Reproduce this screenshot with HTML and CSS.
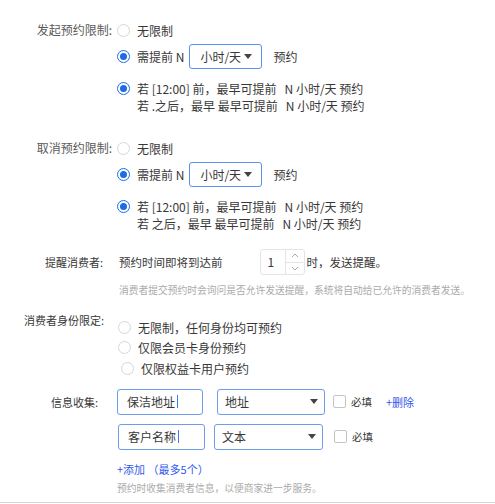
FILE: index.html
```html
<!DOCTYPE html>
<html lang="zh-CN">

<head>
    <meta charset="utf-8">
    <meta name="viewport" content="width=device-width, initial-scale=1.0">
    <title>预约设置</title>
    <link rel="stylesheet" href="styles.css">
</head>

<body>
    <div class="page">

        <!-- 发起预约限制 -->
        <div class="field field-first">
            <div class="field-label label-lg">发起预约限制:</div>
            <div class="options">
                <div class="opt"><span class="radio"></span>无限制</div>
                <div class="opt opt-select">
                    <span class="radio on"></span>需提前 N
                    <div class="select">小时/天<i class="caret"></i></div>
                    <span class="after">预约</span>
                </div>
                <div class="opt opt-multi">
                    <span class="radio on"></span>
                    <div class="lines">若 [12:00] 前，最早可提前   N 小时/天 预约
若 .之后，最早 最早可提前   N 小时/天 预约</div>
                </div>
            </div>
        </div>

        <!-- 取消预约限制 -->
        <div class="field field-cancel">
            <div class="field-label label-lg">取消预约限制:</div>
            <div class="options">
                <div class="opt"><span class="radio"></span>无限制</div>
                <div class="opt opt-select">
                    <span class="radio on"></span>需提前 N
                    <div class="select">小时/天<i class="caret"></i></div>
                    <span class="after">预约</span>
                </div>
                <div class="opt opt-multi">
                    <span class="radio on"></span>
                    <div class="lines">若 [12:00] 前，最早可提前   N 小时/天 预约
若 之后，最早 最早可提前   N 小时/天 预约</div>
                </div>
            </div>
        </div>

        <!-- 提醒消费者 -->
        <div class="field field-remind">
            <div class="field-label label-sm label-tall">提醒消费者:</div>
            <div class="remind">
                <div class="remind-row">
                    <span>预约时间即将到达前</span>
                    <div class="num">
                        <span class="num-val">1</span>
                        <div class="num-spin">
                            <span><svg width="8" height="5" viewBox="0 0 8 5"><polyline points="1,4 4,1 7,4" fill="none" stroke="#aaa" stroke-width="1"/></svg></span>
                            <span><svg width="8" height="5" viewBox="0 0 8 5"><polyline points="1,1 4,4 7,1" fill="none" stroke="#aaa" stroke-width="1"/></svg></span>
                        </div>
                    </div>
                    <span class="remind-end">时，发送提醒。</span>
                </div>
                <p class="help">消费者提交预约时会询问是否允许发送提醒，系统将自动给已允许的消费者发送。</p>
            </div>
        </div>

        <!-- 消费者身份限定 -->
        <div class="field field-identity">
            <div class="field-label label-id">消费者身份限定:</div>
            <div class="options identity">
                <div class="opt"><span class="radio"></span>无限制，任何身份均可预约</div>
                <div class="opt"><span class="radio"></span>仅限会员卡身份预约</div>
                <div class="opt opt-shift"><span class="radio"></span>仅限权益卡用户预约</div>
            </div>
        </div>

        <!-- 信息收集 -->
        <div class="field field-collect">
            <div class="field-label label-xs label-tall">信息收集:</div>
            <div class="collect">
                <div class="collect-row">
                    <div class="text-input">保洁地址<i class="cursor"></i></div>
                    <div class="type-select">地址<i class="caret"></i></div>
                    <span class="check"></span>
                    <span class="check-text">必填</span>
                    <a class="link del">+删除</a>
                </div>
                <div class="collect-row row-two">
                    <div class="text-input">客户名称<i class="cursor"></i></div>
                    <div class="type-select">文本<i class="caret"></i></div>
                    <span class="check"></span>
                    <span class="check-text">必填</span>
                </div>
                <a class="link add">+添加 （最多5个）</a>
                <p class="help help-collect">预约时收集消费者信息，以便商家进一步服务。</p>
            </div>
        </div>

    </div>
</body>

</html>
```

FILE: styles.css
```css
* {
    margin: 0;
    padding: 0;
    box-sizing: border-box;
}

body {
    font-family: "Noto Sans CJK SC", "Noto Sans", sans-serif;
    font-size: 12px;
    color: #383838;
    background-color: #ffffff;
}

.page {
    padding-bottom: 7px;
    border-bottom: 1px solid #d4d4d4;
}

.field {
    display: flex;
    align-items: flex-start;
}

.field-label {
    flex: none;
    text-align: right;
    color: #5a5a5a;
    line-height: 20px;
}

.label-lg {
    width: 112px;
    margin-right: 5px;
}

.label-sm {
    width: 103px;
    margin-right: 16px;
    font-size: 11px;
    color: #383838;
}

.label-id {
    width: 104px;
    margin-right: 14px;
    font-size: 11px;
    line-height: 16px;
    color: #383838;
}

.label-xs {
    width: 98px;
    margin-right: 19px;
    font-size: 11px;
    color: #383838;
}

.label-tall {
    line-height: 26px;
}

.field-first {
    margin-top: 20px;
}

.field-cancel {
    margin-top: 24px;
}

.field-remind {
    margin-top: 17px;
}

.field-identity {
    margin-top: 15px;
}

.field-collect {
    margin-top: 10px;
}

/* radio rows */
.options {
    display: flex;
    flex-direction: column;
}

.opt {
    display: flex;
    align-items: center;
    height: 20px;
    white-space: nowrap;
}

.opt-select {
    height: 25px;
    margin-top: 4px;
}

.opt-multi {
    height: auto;
    margin-top: 11px;
    align-items: flex-start;
}

.opt-multi .radio {
    margin-top: 2px;
}

.lines {
    white-space: pre;
    line-height: 17px;
}

.radio {
    flex: none;
    width: 13px;
    height: 13px;
    border: 1px solid #d6d6d6;
    border-radius: 50%;
    margin-right: 7px;
    background-color: #fff;
}

.radio.on {
    border-color: #1c6ce6;
}

.radio.on::after {
    content: "";
    display: block;
    width: 7px;
    height: 7px;
    margin: 2px;
    border-radius: 50%;
    background-color: #1c6ce6;
}

.select {
    display: flex;
    align-items: center;
    justify-content: space-between;
    width: 73px;
    height: 25px;
    margin-left: 5px;
    padding: 0 9px 0 10px;
    border: 1px solid #5b91ee;
    border-radius: 3px;
}

.caret {
    width: 0;
    height: 0;
    border-left: 4px solid transparent;
    border-right: 4px solid transparent;
    border-top: 5px solid #444;
}

.after {
    margin-left: 11px;
}

/* reminder */
.remind-row {
    display: flex;
    align-items: center;
    height: 26px;
    font-size: 11.5px;
}

.num {
    display: flex;
    width: 45px;
    height: 26px;
    margin-left: 37px;
    border: 1px solid #e4e4e4;
    border-radius: 3px;
    background-color: #fff;
}

.num-val {
    width: 24px;
    padding-left: 7px;
    line-height: 24px;
    font-size: 12px;
}

.num-spin {
    display: flex;
    flex-direction: column;
    flex: 1;
    border-left: 1px solid #e4e4e4;
}

.num-spin span {
    flex: 1;
    display: flex;
    align-items: center;
    justify-content: center;
}

.num-spin span + span {
    border-top: 1px solid #e4e4e4;
}

.remind-end {
    margin-left: 2px;
}

.help {
    font-size: 9.75px;
    line-height: 14px;
    color: #aaa;
    white-space: nowrap;
}

.remind .help {
    margin-top: 8px;
}

/* identity */
.identity {
    margin-top: 5px;
}

.identity .opt {
    height: 20.5px;
}

.opt-shift {
    padding-left: 3px;
}

/* collect */
.collect {
    display: flex;
    flex-direction: column;
    align-items: flex-start;
}

.collect-row {
    display: flex;
    align-items: center;
    height: 26px;
}

.text-input {
    display: flex;
    align-items: center;
    width: 86px;
    height: 26px;
    padding-left: 9px;
    border: 1px solid #6f9bec;
    border-radius: 3px;
}

.cursor {
    width: 1px;
    height: 13px;
    margin-left: 2px;
    background-color: #3a7bf0;
}

.type-select {
    display: flex;
    align-items: center;
    justify-content: space-between;
    width: 108px;
    height: 26px;
    margin-left: 14px;
    padding: 0 6px 0 7px;
    border: 1px solid #6f9bec;
    border-radius: 3px;
}

.check {
    width: 13px;
    height: 13px;
    margin-left: 8px;
    border: 1px solid #c4c4c4;
    border-radius: 2px;
}

.check-text {
    margin-left: 5px;
    font-size: 10.5px;
}

.link {
    color: #3359ee;
    font-size: 11px;
    cursor: pointer;
}

.del {
    margin-left: 14px;
}

.row-two {
    margin-top: 9px;
}

.row-two .text-input {
    width: 87px;
    margin-left: 1px;
}

.row-two .type-select {
    width: 109px;
    margin-left: 9px;
}

.row-two .check {
    margin-left: 11px;
}

.add {
    margin-top: 11px;
    line-height: 16px;
}

.help-collect {
    margin-top: 4px;
}
```
